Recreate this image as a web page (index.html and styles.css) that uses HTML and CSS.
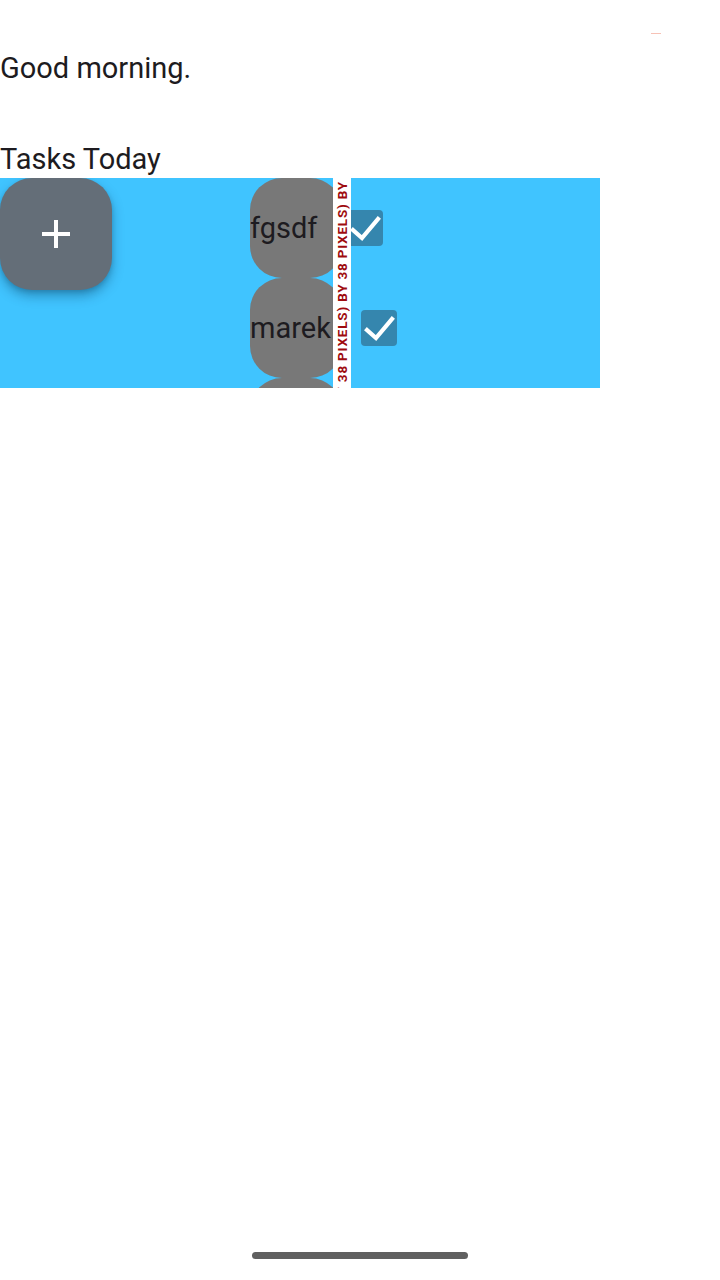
FILE: index.html
```html
<!DOCTYPE html>
<html lang="en">
<head>
<meta charset="utf-8">
<title>Tasks</title>
<link rel="stylesheet" href="styles.css">
</head>
<body>
<div class="screen">
  <div class="status-mark"></div>
  <h1 class="greeting">Good morning.</h1>
  <h2 class="section-title">Tasks Today</h2>
  <div class="board">
    <button class="fab" aria-label="Add task">
      <svg viewBox="0 0 24 24" width="48" height="48"><path fill="#ffffff" d="M19 13h-6v6h-2v-6H5v-2h6V5h2v6h6v2z"/></svg>
    </button>
    <div class="tasks">
      <div class="task">
        <div class="pill">fgsdf</div>
        <span class="check"><svg viewBox="0 0 36 36" width="36" height="36"><path d="M6 20 L15 28 L31 9" fill="none" stroke="#ffffff" stroke-width="4.2" stroke-linecap="square"/></svg></span>
      </div>
      <div class="task">
        <div class="pill">marek</div>
        <span class="check"><svg viewBox="0 0 36 36" width="36" height="36"><path d="M6 20 L15 28 L31 9" fill="none" stroke="#ffffff" stroke-width="4.2" stroke-linecap="square"/></svg></span>
      </div>
      <div class="task">
        <div class="pill pill-empty"></div>
      </div>
    </div>
    <div class="overflow-stripe" aria-hidden="true">
      <span class="overflow-label">BY 38 PIXELS) BY 38 PIXELS) BY</span>
    </div>
  </div>
  <div class="home-indicator"></div>
</div>
</body>
</html>
```

FILE: styles.css
```css
* { box-sizing: border-box; }
html, body {
  margin: 0;
  padding: 0;
  background: #ffffff;
}
.screen {
  position: relative;
  width: 720px;
  height: 1280px;
  overflow: hidden;
  font-family: Roboto, "Noto Sans", sans-serif;
  color: #1d1b20;
}
.status-mark {
  position: absolute;
  left: 651px;
  top: 33px;
  width: 10px;
  height: 1px;
  background: #f7c2b6;
}
.greeting {
  margin: 0;
  padding-top: 52px;
  font-size: 29px;
  line-height: 32px;
  font-weight: 400;
}
.section-title {
  margin: 59px 0 0;
  font-size: 29px;
  line-height: 32px;
  font-weight: 400;
}
.board {
  position: relative;
  margin-top: 3px;
  width: 600px;
  height: 210px;
  background: #40c4ff;
  display: flex;
  align-items: flex-start;
  overflow: hidden;
}
.fab {
  flex: none;
  width: 112px;
  height: 112px;
  border: none;
  padding: 0;
  border-radius: 32px;
  background: #646e78;
  display: flex;
  align-items: center;
  justify-content: center;
  box-shadow: 0 6px 12px rgba(0, 40, 70, 0.35), 0 2px 4px rgba(0, 0, 0, 0.12);
}
.tasks {
  margin-left: 138px;
  display: flex;
  flex-direction: column;
}
.task {
  height: 100px;
  display: flex;
  align-items: center;
}
.pill {
  position: relative;
  z-index: 0;
  height: 100px;
  display: flex;
  align-items: center;
  padding-right: 30px;
  font-size: 29px;
  color: #1d1b20;
}
.pill::before {
  content: "";
  position: absolute;
  left: 0;
  top: 0;
  bottom: 0;
  width: 92px;
  border-radius: 32px;
  background: #787878;
  z-index: -1;
}
.pill-empty {
  width: 92px;
  padding: 0;
}
.check {
  width: 36px;
  height: 36px;
  border-radius: 4px;
  background: #3586ae;
  display: block;
}
.check svg { display: block; }
.overflow-stripe {
  position: absolute;
  left: 333px;
  top: 0;
  width: 18px;
  height: 210px;
  background: #ffffff;
  overflow: hidden;
}
.overflow-label {
  position: absolute;
  left: 0;
  top: 3px;
  writing-mode: vertical-rl;
  transform: rotate(180deg);
  white-space: nowrap;
  font-family: Roboto, "DejaVu Sans", sans-serif;
  font-weight: 700;
  font-size: 13.5px;
  line-height: 18px;
  letter-spacing: 0.8px;
  color: #9e0b0f;
}
.home-indicator {
  position: absolute;
  left: 252px;
  top: 1252px;
  width: 216px;
  height: 7px;
  border-radius: 4px;
  background: #606060;
}
```
